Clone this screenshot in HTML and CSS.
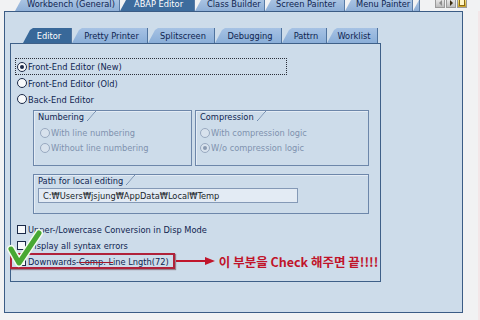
FILE: index.html
```html
<!DOCTYPE html>
<html>
<head>
<meta charset="utf-8">
<link rel="stylesheet" href="styles.css">
</head>
<body>
<div class="screen">
  <div class="toprow">
    <div class="ttabs">
      <div class="ttab w-wb">Workbench (General)</div>
      <div class="ttab sel w-abap">ABAP Editor</div>
      <div class="ttab w-cb">Class Builder</div>
      <div class="ttab w-sp">Screen Painter</div>
      <div class="ttab w-mp">Menu Painter</div>
      <div class="ttab w-stub"></div>
    </div>
    <div class="navbtns">
      <span class="nb"><i class="tri-l"></i></span>
      <span class="nb"><i class="tri-r"></i></span>
      <span class="nb doc"><i class="docico"></i></span>
    </div>
  </div>
  <div class="mainrow">
    <div class="outer">
      <div class="itabs">
        <div class="itab sel w-ed">Editor</div>
        <div class="itab w-pp">Pretty Printer</div>
        <div class="itab w-ss">Splitscreen</div>
        <div class="itab w-db">Debugging</div>
        <div class="itab w-pt">Pattrn</div>
        <div class="itab w-wl">Worklist</div>
      </div>
      <div class="ipanel">
        <div class="opt focus first"><span class="radio on"></span>Front-End Editor (New)</div>
        <div class="opt"><span class="radio"></span>Front-End Editor (Old)</div>
        <div class="opt"><span class="radio"></span>Back-End Editor</div>
        <div class="groups">
          <div class="gbox num">
            <div class="gtitle"><span>Numbering</span><i class="slant"></i></div>
            <div class="gopt dis"><span class="radio dis"></span>With line numbering</div>
            <div class="gopt dis"><span class="radio dis"></span>Without line numbering</div>
          </div>
          <div class="gbox comp">
            <div class="gtitle"><span>Compression</span><i class="slant"></i></div>
            <div class="gopt dis"><span class="radio dis"></span>With compression logic</div>
            <div class="gopt dis"><span class="radio dis on"></span>W/o compression logic</div>
          </div>
        </div>
        <div class="gbox path">
          <div class="gtitle"><span>Path for local editing</span><i class="slant"></i></div>
          <div class="field">C:₩Users₩jsjung₩AppData₩Local₩Temp</div>
        </div>
        <div class="chk"><span class="cbox"></span>Upper-/Lowercase Conversion in Disp Mode</div>
        <div class="chk"><span class="cbox"></span>Display all syntax errors</div>
        <div class="chk last">
          <span class="hl"><span class="cbox"></span>Downwards-<span class="strike">Comp. L</span>ine Lngth(72)</span>
          <svg class="arrow" width="40" height="10" viewBox="0 0 40 10"><line x1="0" y1="5" x2="31" y2="5" stroke="#c0162c" stroke-width="2"/><polygon points="29,1 39,5 29,9" fill="#c0162c"/></svg>
          <span class="note">이 부분을 Check 해주면 끝!!!!</span>
        </div>
        <svg class="tick" width="48" height="44" viewBox="0 0 48 44">
          <polyline points="11,21 19,35 39,5" fill="none" stroke="#f4fbf0" stroke-width="8" stroke-linecap="round" stroke-linejoin="round"/>
          <polyline points="11,21 19,35 39,5" fill="none" stroke="#48a832" stroke-width="5" stroke-linecap="round" stroke-linejoin="round"/>
        </svg>
      </div>
    </div>
    <div class="side"></div>
  </div>
</div>
</body>
</html>
```
FILE: styles.css
```css
html, body {
  margin: 0;
  padding: 0;
}
body {
  width: 480px;
  height: 320px;
  overflow: hidden;
  background: #f1f2f3;
  font-family: "DejaVu Sans Condensed", "DejaVu Sans", sans-serif;
  font-size: 9.2px;
  color: #0f2450;
}
.screen {
  display: flex;
  flex-direction: column;
  height: 320px;
}
.toprow {
  height: 11px;
  display: flex;
  overflow: hidden;
}
.ttabs {
  display: flex;
  margin-left: 15px;
}
.ttab {
  height: 11px;
  line-height: 8px;
  padding-left: 12px;
  box-sizing: border-box;
  background: linear-gradient(#a9c3e2, #8eafd7);
  color: #0f2450;
  white-space: nowrap;
  clip-path: polygon(0 100%, 6px 0, 100% 0, 100% 100%);
  border-right: 1px solid #5a7ca6;
}
.ttab.sel {
  background: #3d6c9d;
  color: #ffffff;
}
.w-wb { width: 105px; }
.w-abap { width: 75px; padding-left: 14px; }
.w-cb { width: 70px; }
.w-sp { width: 80px; padding-left: 11px; }
.w-mp { width: 68px; padding-left: 11px; }
.w-stub { width: 7px; padding: 0; }
.navbtns {
  display: flex;
  margin-left: 15px;
  gap: 1px;
}
.nb {
  width: 10px;
  height: 8px;
  background: linear-gradient(#e6e6e6, #bdbdbd);
  border: 1px solid #9a9a9a;
  border-top: none;
  display: flex;
  align-items: flex-end;
  justify-content: center;
  box-sizing: border-box;
}
.tri-l {
  width: 0; height: 0;
  border-top: 3px solid transparent;
  border-bottom: 3px solid transparent;
  border-right: 3px solid #8c8c8c;
  margin-bottom: 1px;
}
.tri-r {
  width: 0; height: 0;
  border-top: 3px solid transparent;
  border-bottom: 3px solid transparent;
  border-left: 3px solid #3a2a10;
  margin-bottom: 1px;
}
.nb.doc { background: linear-gradient(#f6e27a, #c9a22b); }
.docico {
  width: 4px;
  height: 5px;
  background: #fff6c8;
  border: 1px solid #8a6a10;
  margin-bottom: 1px;
}
.mainrow {
  display: flex;
  height: 309px;
}
.outer {
  margin-left: 4px;
  width: 459px;
  height: 302px;
  box-sizing: border-box;
  border: 1px solid #3b5c85;
  background: #cddcea;
  padding-top: 16px;
  padding-left: 5px;
  display: flex;
  flex-direction: column;
}
.side {
  flex: 1;
  border-right: 2px solid #f3e6e8;
}
.itabs {
  display: flex;
  height: 15px;
  padding-left: 13px;
}
.itab {
  height: 15px;
  line-height: 15px;
  box-sizing: border-box;
  padding-left: 4px;
  text-align: center;
  white-space: nowrap;
  background: linear-gradient(#a6c2e4, #8aaed8);
  border-right: 1px solid #4f739e;
  color: #0f2450;
  clip-path: polygon(0 100%, 7px 2px, 10px 0, 100% 0, 100% 100%);
}
.itab.sel {
  background: #386899;
  color: #ffffff;
}
.w-ed { width: 49px; }
.w-pp { width: 76px; }
.w-ss { width: 67px; }
.w-db { width: 67px; }
.w-pt { width: 45px; }
.w-wl { width: 51px; }
.ipanel {
  position: relative;
  width: 371px;
  height: 239px;
  box-sizing: border-box;
  border: 1px solid #3e6088;
  padding-top: 14px;
  display: flex;
  flex-direction: column;
}
.opt {
  height: 16px;
  margin-left: 4px;
  width: 272px;
  box-sizing: border-box;
  border: 1px dotted transparent;
  padding-left: 1px;
  display: flex;
  align-items: center;
  white-space: nowrap;
}
.opt.first { height: 17px; }
.opt.focus { border-color: #2a2f3a; }
.radio {
  width: 10px;
  height: 10px;
  box-sizing: border-box;
  border-radius: 50%;
  border: 1px solid #1b2a48;
  background: #f7f9fb;
  margin-right: 1px;
  flex: none;
  display: flex;
  align-items: center;
  justify-content: center;
}
.radio.on::after {
  content: "";
  width: 4px;
  height: 4px;
  border-radius: 50%;
  background: #1b2a48;
}
.radio.dis {
  border-color: #98a9c0;
  background: #d8e2ed;
}
.radio.dis.on::after { background: #8a9ab1; }
.groups {
  display: flex;
  margin-top: 3px;
  margin-left: 22px;
  gap: 3px;
}
.gbox {
  box-sizing: border-box;
  border: 1px solid #6d87aa;
  box-shadow: inset 1px 1px 0 #e4ecf5;
  display: flex;
  flex-direction: column;
}
.gbox.num { width: 159px; height: 56px; padding-left: 6px; }
.gbox.comp { width: 174px; height: 56px; padding-left: 4px; }
.gtitle {
  height: 10px;
  display: flex;
  align-items: center;
  color: #0f2450;
  white-space: nowrap;
  margin-bottom: 4px;
}
.num .gtitle { margin-left: -2px; }
.slant {
  width: 9px;
  height: 10px;
  margin-left: 3px;
  background: linear-gradient(to top left, transparent calc(50% - 0.6px), #6d87aa 50%, transparent calc(50% + 0.6px));
}
.gopt {
  height: 15px;
  display: flex;
  align-items: center;
  white-space: nowrap;
}
.gopt.dis { color: #7f92ae; }
.gbox.path {
  width: 336px;
  height: 40px;
  margin-left: 22px;
  margin-top: 8px;
  padding-left: 4px;
}
.path .gtitle { margin-bottom: 3px; }
.field {
  width: 260px;
  height: 15px;
  box-sizing: border-box;
  border: 1px solid #8499b6;
  background: #e3ebf4;
  padding-left: 4px;
  line-height: 13px;
  color: #1a1f2a;
  white-space: nowrap;
}
.chk {
  height: 16px;
  padding-left: 6px;
  display: flex;
  align-items: center;
  white-space: nowrap;
}
.gbox.path + .chk { margin-top: 7px; }
.cbox {
  width: 9px;
  height: 9px;
  box-sizing: border-box;
  border: 1px solid #1b2a48;
  background: #f7f9fb;
  margin-right: 2px;
  flex: none;
}
.chk.last { padding-left: 0; }
.hl {
  display: flex;
  align-items: center;
  height: 16px;
  box-sizing: border-box;
  margin-left: -1px;
  padding-left: 5px;
  padding-right: 4px;
  border: 2px solid #b0223a;
  box-shadow: 1px 1px 1px rgba(80, 20, 30, 0.45);
}
.strike {
  text-decoration: line-through;
  text-decoration-color: #a3192c;
}
.arrow {
  flex: none;
  margin-left: 1px;
}
.note {
  margin-left: 3px;
  color: #c0142a;
  font-family: "Noto Sans CJK KR", "Noto Sans", sans-serif;
  font-weight: bold;
  font-size: 12.5px;
}
.tick {
  position: absolute;
  left: -11px;
  top: 184px;
}
```
